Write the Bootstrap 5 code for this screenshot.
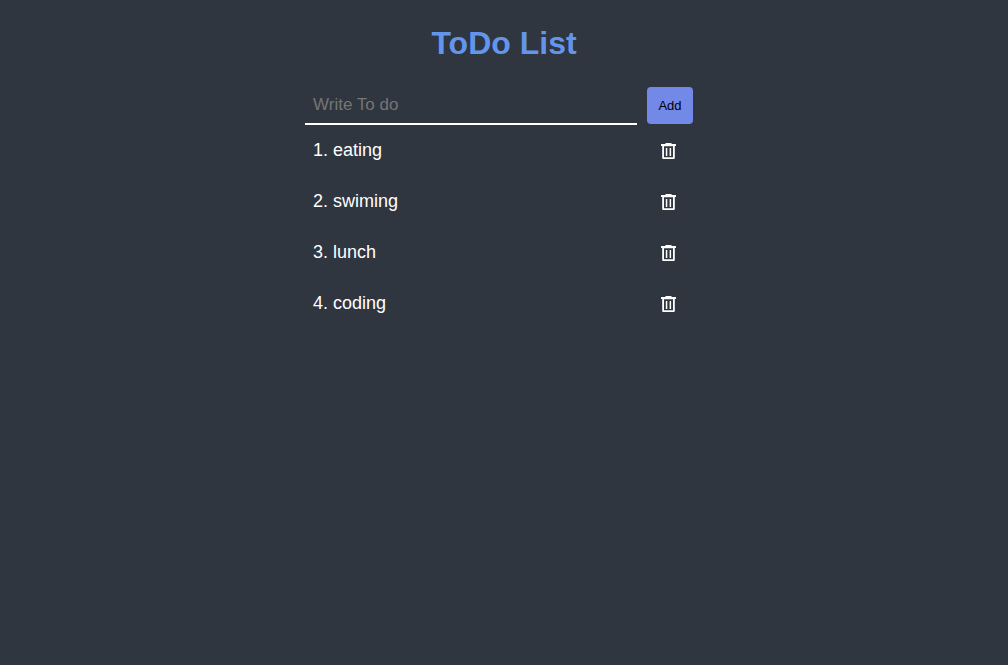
<!DOCTYPE html>
<html lang="en">
<head>
<meta charset="utf-8">
<meta name="viewport" content="width=device-width, initial-scale=1">
<title>ToDo List</title>
<link rel="stylesheet" href="https://cdn.jsdelivr.net/npm/bootstrap@5.3.0/dist/css/bootstrap.min.css">
<style>
body { background: #30363f; color: #fff; font-family: "Liberation Sans", Arial, sans-serif; }
.todo-title { color: #6495ed; font-size: 32px; line-height: 39px; margin-bottom: 22px; }
.todo-app { max-width: 398px; }
.todo-form { gap: 10px; padding-right: 10px; }
.todo-input, .todo-input:focus { height: 40px; padding: 2px 8px 0; background: transparent; color: #fff; border-bottom: 2px solid #fff !important; font-size: 17px; box-shadow: none; }
.todo-input::placeholder { color: #757575; }
.todo-add { width: 46px; height: 37px; padding: 2px 0 0; background: #7289e8; color: #000; font-size: 13px; border-radius: 4px; }
.todo-item { height: 51px; font-size: 18px; line-height: 21px; }
</style>
</head>
<body>
<svg class="d-none" xmlns="http://www.w3.org/2000/svg">
<symbol id="trash" viewBox="0 0 20 21"><path fill="currentColor" fill-rule="evenodd" d="M7 3h5l1 1h3.5q.5 0 .5.5V6H2V4.500q0-.5.5-.5H6zM3.200 6h12.600v12q0 1-1 1H4.200q-1 0-1-1zM5 6.300V17.200h9V6.300z"/><path fill="currentColor" d="M6.800 8h1.500v8H6.800zM10.600 8h1.500v8h-1.500z"/></symbol>
</svg>
<main class="todo-app container-fluid p-0 pt-4">
<h1 class="todo-title fw-bold text-center">ToDo List</h1>
<form class="todo-form d-flex align-items-center" onsubmit="return false">
<input class="todo-input form-control border-0 rounded-0" type="text" placeholder="Write To do" aria-label="Write To do">
<button class="todo-add btn border-0 flex-shrink-0" type="submit">Add</button>
</form>
<ol class="list-unstyled m-0">
<li class="todo-item d-flex align-items-center justify-content-between px-2"><span>1. eating</span><button class="btn p-0 border-0 text-white d-flex me-3" type="button" aria-label="Delete eating"><svg width="20" height="21"><use href="#trash"/></svg></button></li>
<li class="todo-item d-flex align-items-center justify-content-between px-2"><span>2. swiming</span><button class="btn p-0 border-0 text-white d-flex me-3" type="button" aria-label="Delete swiming"><svg width="20" height="21"><use href="#trash"/></svg></button></li>
<li class="todo-item d-flex align-items-center justify-content-between px-2"><span>3. lunch</span><button class="btn p-0 border-0 text-white d-flex me-3" type="button" aria-label="Delete lunch"><svg width="20" height="21"><use href="#trash"/></svg></button></li>
<li class="todo-item d-flex align-items-center justify-content-between px-2"><span>4. coding</span><button class="btn p-0 border-0 text-white d-flex me-3" type="button" aria-label="Delete coding"><svg width="20" height="21"><use href="#trash"/></svg></button></li>
</ol>
</main>
<script src="https://cdn.jsdelivr.net/npm/bootstrap@5.3.0/dist/js/bootstrap.bundle.min.js"></script>
</body>
</html>
